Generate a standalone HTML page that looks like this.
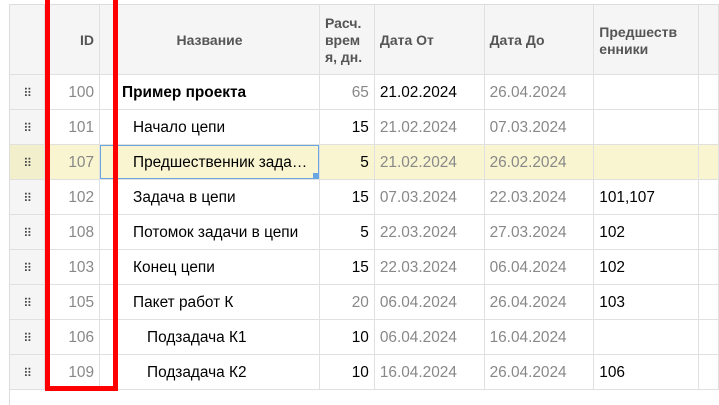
<!DOCTYPE html>
<html><head><meta charset="utf-8"><style>
body{margin:0;width:719px;height:404px;background:#fff;overflow:hidden;font-family:"Liberation Sans","DejaVu Sans",sans-serif;position:relative}
.g{position:absolute;left:9px;top:4px;width:712px;height:400px;border-left:1px solid #ddd;border-top:1px solid #ddd}
table{border-collapse:collapse;table-layout:fixed;position:absolute;left:10px;top:5px}
td,th{border-right:1px solid #e0e0e0;border-bottom:1px solid #e0e0e0;padding:2px 5px 0;white-space:nowrap;overflow:hidden;height:32px;font-size:15.4px}
th{height:67px;background:#f5f5f5;color:#555;font-weight:bold;font-size:14px;text-align:left;white-space:normal;line-height:17px}
td.h{background:#f5f5f5;text-align:center;color:#444;font-size:12px;letter-spacing:-1px}
.r{text-align:right}.m{color:#888}
tr.sel td{background:#f8f5d0}
tr.sel td.h{background:#f2efcc}
.sb{position:absolute;left:100px;top:145px;width:217px;height:32px;border:1.5px solid #6aa7e0}
.sb span{position:absolute;right:-1px;bottom:-1px;width:6px;height:6px;background:#6aa7e0}
.red{position:absolute;left:45px;top:-5px;width:63px;height:386px;border:5px solid #f00}
</style></head><body>
<div class="g"></div>
<table>
<colgroup><col style="width:35px"><col style="width:55px"><col style="width:220px"><col style="width:55px"><col style="width:110px"><col style="width:110px"><col style="width:105px"><col style="width:20px"></colgroup>
<tr><th></th><th class="r">ID</th><th style="text-align:center">Название</th><th>Расч. врем я, дн.</th><th>Дата От</th><th>Дата До</th><th>Предшеств енники</th><th></th></tr>
<tr><td class="h">⠿</td><td class="r m">100</td><td style="padding-left:22px"><b>Пример проекта</b></td><td class="r m">65</td><td>21.02.2024</td><td class="m">26.04.2024</td><td></td><td></td></tr>
<tr><td class="h">⠿</td><td class="r m">101</td><td style="padding-left:33px">Начало цепи</td><td class="r">15</td><td class="m">21.02.2024</td><td class="m">07.03.2024</td><td></td><td></td></tr>
<tr class="sel"><td class="h">⠿</td><td class="r m">107</td><td style="padding-left:33px">Предшественник зада…</td><td class="r">5</td><td class="m">21.02.2024</td><td class="m">26.02.2024</td><td></td><td></td></tr>
<tr><td class="h">⠿</td><td class="r m">102</td><td style="padding-left:33px">Задача в цепи</td><td class="r">15</td><td class="m">07.03.2024</td><td class="m">22.03.2024</td><td>101,107</td><td></td></tr>
<tr><td class="h">⠿</td><td class="r m">108</td><td style="padding-left:33px">Потомок задачи в цепи</td><td class="r">5</td><td class="m">22.03.2024</td><td class="m">27.03.2024</td><td>102</td><td></td></tr>
<tr><td class="h">⠿</td><td class="r m">103</td><td style="padding-left:33px">Конец цепи</td><td class="r">15</td><td class="m">22.03.2024</td><td class="m">06.04.2024</td><td>102</td><td></td></tr>
<tr><td class="h">⠿</td><td class="r m">105</td><td style="padding-left:33px">Пакет работ К</td><td class="r m">20</td><td class="m">06.04.2024</td><td class="m">26.04.2024</td><td>103</td><td></td></tr>
<tr><td class="h">⠿</td><td class="r m">106</td><td style="padding-left:47px">Подзадача К1</td><td class="r">10</td><td class="m">06.04.2024</td><td class="m">16.04.2024</td><td></td><td></td></tr>
<tr><td class="h">⠿</td><td class="r m">109</td><td style="padding-left:47px">Подзадача К2</td><td class="r">10</td><td class="m">16.04.2024</td><td class="m">26.04.2024</td><td>106</td><td></td></tr>
</table>
<div class="sb"><span></span></div>
<div class="red"></div>
</body></html>
